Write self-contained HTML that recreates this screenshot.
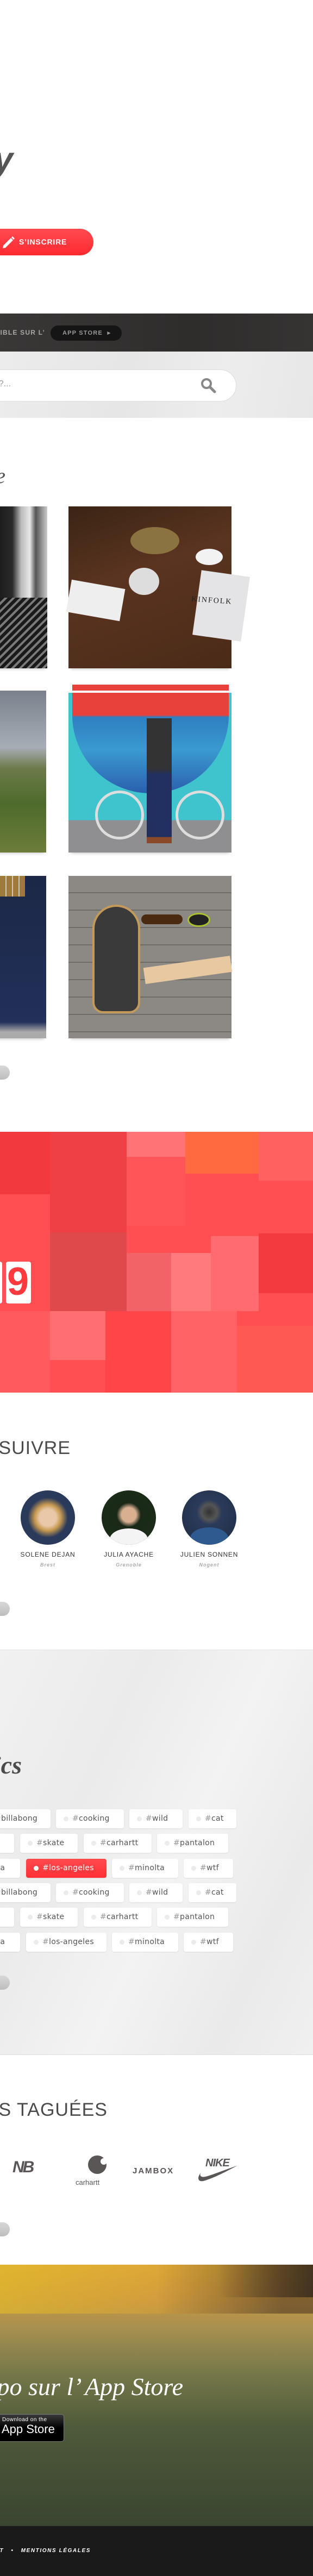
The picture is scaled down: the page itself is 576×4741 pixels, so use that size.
<!DOCTYPE html>
<html><head><meta charset="utf-8"><style>
*{margin:0;padding:0;box-sizing:border-box}
html,body{width:576px;height:4741px;overflow:hidden;background:#fff;font-family:"Liberation Sans",sans-serif}
#w{position:relative;width:576px;height:4741px;overflow:hidden}
.a{position:absolute}
.r{white-space:nowrap}
.pill{position:absolute;left:-20px;width:38px;height:26px;border-radius:13px;background:linear-gradient(#d8d8d8,#bdbdbd)}
.ph{position:absolute;box-shadow:0 6px 5px -4px rgba(0,0,0,.18)}
.tag{position:absolute;height:35px;background:#fff;border-radius:4px;box-shadow:0 1px 2px rgba(0,0,0,.08);font-family:"DejaVu Sans",sans-serif;font-size:14px;color:#555;line-height:35px;white-space:nowrap;overflow:hidden;letter-spacing:.3px}
.tag i{position:absolute;left:14px;top:13px;width:9px;height:9px;border-radius:50%;background:#ebebeb}
.tag span{position:absolute;left:30px}
.tag b{font-weight:normal;color:#999}
.tag.on{background:linear-gradient(#ff4a4e,#ff2f35);color:#fff}
.tag.on i{background:#fff}
.tag.on b{color:#fff}
.av{position:absolute;width:100px;height:100px;border-radius:50%;top:2743px;overflow:hidden}
.nm{position:absolute;width:160px;text-align:center;font-size:12px;letter-spacing:.8px;color:#333;top:2854px}
.ct{position:absolute;width:160px;text-align:center;font-size:9px;font-style:italic;font-weight:bold;letter-spacing:1px;color:#aaa;top:2875px}
</style></head><body><div id="w">

<div class="a r" style="right:552px;top:256px;font:italic bold 64px 'Liberation Sans',sans-serif;color:#575454">Spotify</div>

<div class="a" style="left:-60px;top:421px;width:232px;height:49px;border-radius:25px;background:linear-gradient(#ff4a50,#ff2a30)"></div>
<svg class="a" style="left:2px;top:432px" width="26" height="26" viewBox="0 0 26 26"><path d="M4 20 L18 6 L22 10 L8 24 L3 25 Z" fill="#fff"/><path d="M19 5 L21 3 L25 7 L23 9 Z" fill="#fff"/></svg>
<div class="a r" style="left:35px;top:437px;font-weight:bold;font-size:14px;color:#fff;letter-spacing:.8px">S’INSCRIRE</div>

<div class="a" style="left:0;top:577px;width:576px;height:70px;background:linear-gradient(90deg,#3a3737,#2f2c2c 60%,#363333)"></div>
<div class="a r" style="right:493px;top:605px;font-weight:bold;font-size:12px;color:#a9a6a6;letter-spacing:1.2px">DISPONIBLE SUR L’</div>
<div class="a" style="left:93px;top:599px;width:131px;height:28px;border-radius:14px;background:#161515"></div>
<div class="a r" style="left:115px;top:606px;font-weight:bold;font-size:11px;color:#9a9898;letter-spacing:1.2px">APP STORE &nbsp;▸</div>

<div class="a" style="left:0;top:647px;width:576px;height:122px;background:linear-gradient(100deg,#ececec,#e6e6e6 40%,#ededed 70%,#e7e7e7)"></div>
<div class="a" style="left:-40px;top:680px;width:475px;height:59px;border-radius:30px;background:#fff;border:1px solid #ddd"></div>
<div class="a r" style="right:556px;top:698px;font-size:16px;color:#999">Rechercher ?...</div>
<svg class="a" style="left:368px;top:694px" width="30" height="30" viewBox="0 0 30 30"><circle cx="12" cy="12" r="8" fill="none" stroke="#8a8787" stroke-width="4"/><path d="M18 18 L27 27" stroke="#8a8787" stroke-width="5" stroke-linecap="round"/></svg>

<div class="a r" style="right:566px;top:852px;font:italic 40px 'Liberation Serif',serif;color:#575454">Tendance</div>

<div class="ph" style="left:-20px;top:932px;width:107px;height:298px;background:linear-gradient(90deg,#111 0,#2a2a2a 40%,#bbb 55%,#e8e8e8 70%,#555 80%,#ccc 100%)"></div>
<div class="a" style="left:0;top:1100px;width:87px;height:130px;background:repeating-linear-gradient(135deg,#1a1a1a 0 6px,#7a7a7a 6px 10px)"></div>
<div class="ph" style="left:126px;top:932px;width:300px;height:298px;background:linear-gradient(160deg,#3a2414,#5a3420 40%,#4a2b18)"></div>
<div class="a" style="left:237px;top:1045px;width:56px;height:50px;border-radius:50%;background:#ddd"></div>
<div class="a" style="left:126px;top:1075px;width:100px;height:60px;background:#eee;transform:rotate(10deg)"></div>
<div class="a" style="left:362px;top:1055px;width:90px;height:120px;background:#e4e4e6;transform:rotate(8deg)"></div>
<div class="a r" style="left:352px;top:1098px;font:14px 'Liberation Serif',serif;letter-spacing:2px;color:#222;transform:rotate(4deg)">KINFOLK</div>
<div class="a" style="left:360px;top:1010px;width:50px;height:30px;border-radius:50%;background:#f2f2f2"></div>
<div class="a" style="left:240px;top:970px;width:90px;height:50px;border-radius:50%;background:#8a7340"></div>

<div class="ph" style="left:-20px;top:1271px;width:105px;height:298px;background:linear-gradient(#7a818c 0,#a7adb5 35%,#6c7a4a 48%,#4e6a2c 70%,#6c7d3a 100%)"></div>
<div class="ph" style="left:126px;top:1271px;width:300px;height:298px;background:linear-gradient(#3fc3cd 0,#3fc3cd 80%,#8f8f92 80%)"></div>
<div class="a" style="left:133px;top:1260px;width:288px;height:200px;border-radius:0 0 144px 144px;background:linear-gradient(#e8413c 0,#e8413c 28%,#2e7fc0 30%,#3a9ad0 60%,#2a5fae 100%)"></div>
<div class="a" style="left:126px;top:1271px;width:300px;height:4px;background:#fff"></div>
<div class="a" style="left:270px;top:1322px;width:46px;height:230px;background:linear-gradient(#333 0,#333 40%,#213060 45%,#213060 95%,#8a4a2a 95%)"></div>
<div class="a" style="left:175px;top:1455px;width:90px;height:90px;border-radius:50%;border:5px solid #ddd"></div>
<div class="a" style="left:323px;top:1455px;width:90px;height:90px;border-radius:50%;border:5px solid #ddd"></div>

<div class="ph" style="left:-20px;top:1612px;width:105px;height:299px;background:linear-gradient(#1c2846,#22305a 90%,#aaa 96%)"></div>
<div class="a" style="left:0;top:1612px;width:46px;height:38px;background:repeating-linear-gradient(90deg,#a07a3a 0 10px,#c8c8b8 10px 12px)"></div>
<div class="ph" style="left:126px;top:1612px;width:300px;height:299px;background:repeating-linear-gradient(#8c8984 0 30px,#6e6b66 30px 32px)"></div>
<div class="a" style="left:170px;top:1665px;width:88px;height:200px;border-radius:44px 44px 20px 20px;border:4px solid #c49a5a;background:#3a3a3a"></div>
<div class="a" style="left:260px;top:1683px;width:76px;height:18px;border-radius:9px;background:#4a2a10"></div>
<div class="a" style="left:345px;top:1680px;width:42px;height:26px;border-radius:50%;background:#222;border:3px solid #aac030"></div>
<div class="a" style="left:265px;top:1770px;width:161px;height:30px;background:#e8c8a0;transform:rotate(-8deg)"></div>

<div class="pill" style="top:1961px"></div>

<div class="a" style="left:0;top:2083px;width:576px;height:480px;background:#ff4f52"></div>
<div class="a" style="left:0;top:2083px;width:92px;height:115px;background:#f2393e"></div>
<div class="a" style="left:92px;top:2083px;width:141px;height:185px;background:#ef4145"></div>
<div class="a" style="left:233px;top:2083px;width:108px;height:46px;background:#ff7275"></div>
<div class="a" style="left:233px;top:2129px;width:108px;height:127px;background:#ff5558"></div>
<div class="a" style="left:341px;top:2083px;width:135px;height:77px;background:#ff6a40"></div>
<div class="a" style="left:476px;top:2083px;width:100px;height:90px;background:#ff6060"></div>
<div class="a" style="left:92px;top:2268px;width:141px;height:145px;background:#e0494c"></div>
<div class="a" style="left:233px;top:2306px;width:82px;height:107px;background:#f26367"></div>
<div class="a" style="left:315px;top:2306px;width:73px;height:107px;background:#ff7a7c"></div>
<div class="a" style="left:388px;top:2275px;width:88px;height:138px;background:#ff6b6e"></div>
<div class="a" style="left:476px;top:2270px;width:100px;height:110px;background:#f23a3f"></div>
<div class="a" style="left:0;top:2413px;width:92px;height:150px;background:#ff5a5e"></div>
<div class="a" style="left:92px;top:2413px;width:102px;height:90px;background:#ff6e70"></div>
<div class="a" style="left:194px;top:2413px;width:121px;height:150px;background:#ff4548"></div>
<div class="a" style="left:315px;top:2413px;width:121px;height:150px;background:#ff6366"></div>
<div class="a" style="left:436px;top:2440px;width:140px;height:123px;background:#ff5a52"></div>
<div class="a" style="left:-40px;top:2322px;width:44px;height:77px;border-radius:4px;background:#fff"></div>
<div class="a" style="left:11px;top:2322px;width:46px;height:77px;border-radius:4px;background:#fff"></div>
<div class="a" style="left:13px;top:2318px;font:bold 72px 'Liberation Sans',sans-serif;color:#ff3a3f">9</div>

<div class="a r" style="right:446px;top:2646px;font-size:34px;color:#4d4a4a;letter-spacing:1px">À SUIVRE</div>
<div class="av" style="left:38px;background:radial-gradient(circle at 50% 50%,#e8c8a8 0,#e8c8a8 22%,#c89a50 34%,#2a3a5a 52%)"></div>
<div class="av" style="left:187px;background:radial-gradient(circle at 50% 45%,#d8b090 0,#d8b090 18%,#1a2818 30%,#1a3018 100%)"><div class="a" style="left:15px;top:70px;width:70px;height:40px;border-radius:50% 50% 0 0;background:#f4f4f4"></div></div>
<div class="av" style="left:335px;background:radial-gradient(circle at 50% 40%,#333 0,#555 18%,#2a3a5a 30%,#1e2e40 100%)"><div class="a" style="left:15px;top:68px;width:70px;height:40px;border-radius:50% 50% 0 0;background:#2f5a90"></div></div>
<div class="nm" style="left:8px">SOLENE DEJAN</div><div class="ct" style="left:8px">Brest</div>
<div class="nm" style="left:157px">JULIA AYACHE</div><div class="ct" style="left:157px">Grenoble</div>
<div class="nm" style="left:305px">JULIEN SONNEN</div><div class="ct" style="left:305px">Nogent</div>

<div class="pill" style="top:2948px"></div>

<div class="a" style="left:0;top:3036px;width:576px;height:746px;background:linear-gradient(115deg,#f1f1f1,#ebebeb 30%,#f3f3f3 55%,#eaeaea 80%,#f0f0f0);border-top:1px solid #e2e2e2;border-bottom:1px solid #ddd"></div>
<div class="a r" style="right:536px;top:3222px;font:italic bold 46px 'Liberation Serif',serif;color:#4d4a4a">Topics</div>

<div class="tag" style="left:-40px;top:3330px;width:133px"><i></i><span><b>#</b>billabong</span></div>
<div class="tag" style="left:103px;top:3330px;width:125px"><i></i><span><b>#</b>cooking</span></div>
<div class="tag" style="left:238px;top:3330px;width:98px"><i></i><span><b>#</b>wild</span></div>
<div class="tag" style="left:347px;top:3330px;width:88px"><i></i><span><b>#</b>cat</span></div>
<div class="tag" style="left:-40px;top:3375px;width:66px"></div>
<div class="tag" style="left:37px;top:3375px;width:106px"><i></i><span><b>#</b>skate</span></div>
<div class="tag" style="left:154px;top:3375px;width:125px"><i></i><span><b>#</b>carhartt</span></div>
<div class="tag" style="left:289px;top:3375px;width:131px"><i></i><span><b>#</b>pantalon</span></div>
<div class="tag" style="left:-60px;top:3421px;width:97px"><i></i><span><b>#</b>nba</span></div>
<div class="tag on" style="left:48px;top:3421px;width:148px"><i></i><span><b>#</b>los-angeles</span></div>
<div class="tag" style="left:206px;top:3421px;width:122px"><i></i><span><b>#</b>minolta</span></div>
<div class="tag" style="left:338px;top:3421px;width:91px"><i></i><span><b>#</b>wtf</span></div>
<div class="tag" style="left:-40px;top:3466px;width:133px"><i></i><span><b>#</b>billabong</span></div>
<div class="tag" style="left:103px;top:3466px;width:125px"><i></i><span><b>#</b>cooking</span></div>
<div class="tag" style="left:238px;top:3466px;width:98px"><i></i><span><b>#</b>wild</span></div>
<div class="tag" style="left:347px;top:3466px;width:88px"><i></i><span><b>#</b>cat</span></div>
<div class="tag" style="left:-40px;top:3511px;width:66px"></div>
<div class="tag" style="left:37px;top:3511px;width:106px"><i></i><span><b>#</b>skate</span></div>
<div class="tag" style="left:154px;top:3511px;width:125px"><i></i><span><b>#</b>carhartt</span></div>
<div class="tag" style="left:289px;top:3511px;width:131px"><i></i><span><b>#</b>pantalon</span></div>
<div class="tag" style="left:-60px;top:3557px;width:97px"><i></i><span><b>#</b>nba</span></div>
<div class="tag" style="left:48px;top:3557px;width:148px"><i></i><span><b>#</b>los-angeles</span></div>
<div class="tag" style="left:206px;top:3557px;width:122px"><i></i><span><b>#</b>minolta</span></div>
<div class="tag" style="left:338px;top:3557px;width:91px"><i></i><span><b>#</b>wtf</span></div>

<div class="pill" style="top:3636px"></div>

<div class="a r" style="right:378px;top:3864px;font-size:34px;color:#4d4a4a;letter-spacing:1px">MARQUES LES PLUS TAGUÉES</div>
<div class="a r" style="left:23px;top:3972px;font:italic 900 30px 'Liberation Sans',sans-serif;color:#5a5656;letter-spacing:-3px">NB</div>
<div class="a" style="left:162px;top:3967px;width:34px;height:34px;border-radius:50%;background:#5a5656"></div>
<div class="a" style="left:185px;top:3972px;width:12px;height:12px;border-radius:50%;background:#fff"></div>
<div class="a r" style="left:139px;top:4009px;font-size:13px;color:#5a5656">carhartt</div>
<div class="a r" style="left:244px;top:3987px;font:bold 15px 'Liberation Sans',sans-serif;color:#5a5656;letter-spacing:2px">JAMBOX</div>
<div class="a r" style="left:378px;top:3970px;font:italic 900 20px 'Liberation Sans',sans-serif;color:#5a5656;letter-spacing:-1px">NIKE</div>
<svg class="a" style="left:362px;top:3982px" width="76" height="38" viewBox="0 0 76 38"><path d="M8 16 C0 26 2 34 12 32 C28 28 52 16 74 4 C50 12 26 22 16 24 C8 26 4 22 8 16 Z" fill="#5a5656"/></svg>

<div class="pill" style="top:4090px"></div>

<div class="a" style="left:0;top:4168px;width:576px;height:481px;background:linear-gradient(#d8a838 0,#c89840 12%,#a89050 24%,#7a7a4a 40%,#4e5a3a 62%,#3a4530 100%)"></div>
<div class="a" style="left:0;top:4168px;width:576px;height:90px;background:linear-gradient(90deg,rgba(230,190,40,.6),rgba(240,170,50,.3) 50%,rgba(60,40,30,.5) 90%)"></div>
<div class="a" style="left:400px;top:4168px;width:176px;height:60px;background:linear-gradient(90deg,rgba(60,40,30,0),rgba(40,30,25,.7))"></div>
<div class="a r" style="right:239px;top:4366px;font:italic 46px 'Liberation Serif',serif;color:#fff">Dispo sur l’ App Store</div>
<div class="a" style="left:-30px;top:4443px;width:148px;height:51px;border-radius:5px;background:linear-gradient(#3a3a3a,#000 50%);border:1px solid #777"></div>
<div class="a r" style="left:4px;top:4448px;font-size:10px;color:#fff;letter-spacing:.5px">Download on the</div>
<div class="a r" style="left:3px;top:4458px;font-size:22px;color:#fff">App Store</div>

<div class="a" style="left:0;top:4649px;width:576px;height:92px;background:#1b1a1b"></div>
<div class="a r" style="right:409px;top:4689px;font:italic bold 10px 'Liberation Sans',sans-serif;color:#fff;letter-spacing:1.6px">CONTACT &nbsp; • &nbsp; MENTIONS LÉGALES</div>

</div></body></html>
